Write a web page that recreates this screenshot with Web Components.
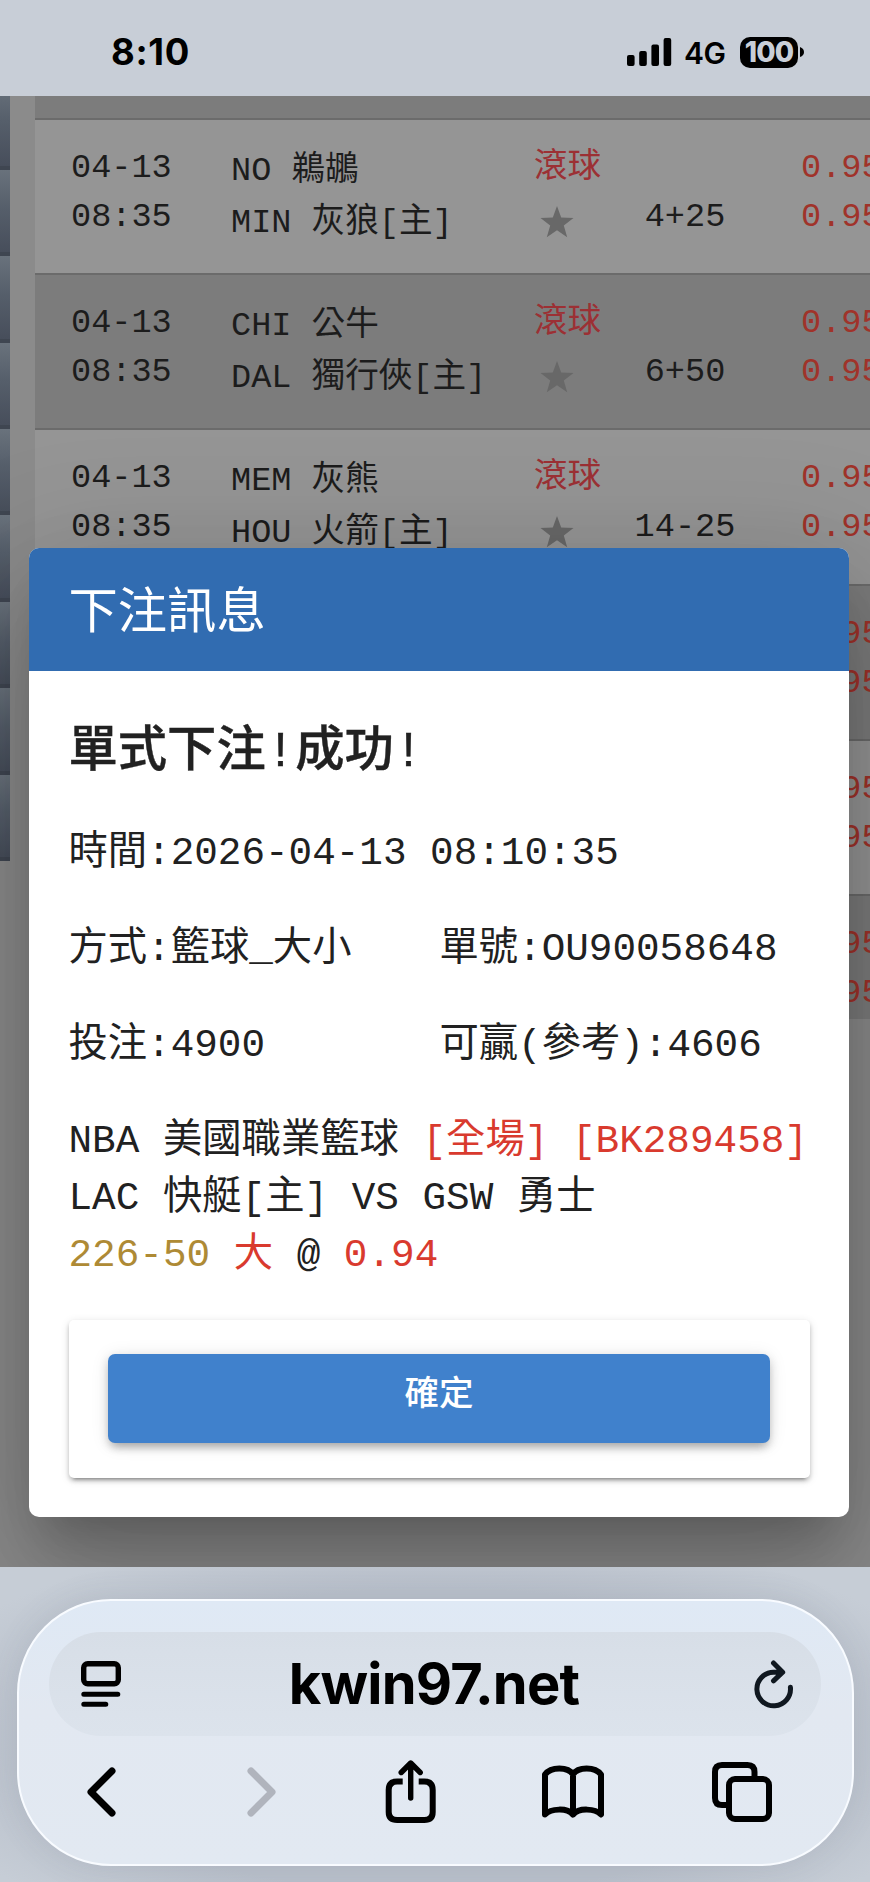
<!DOCTYPE html>
<html lang="zh-Hant">
<head>
<meta charset="utf-8">
<title>下注訊息</title>
<style>
html, body {
  margin: 0;
}
body {
  width: 870px;
  height: 1882px;
  overflow: hidden;
  background: #c8ced7;
  font-family: "Liberation Mono", "Noto Sans CJK TC", monospace;
}
</style>
</head>
<body>
<phone-screen>
  <status-bar slot="status" time="8:10" network="4G" battery="100"></status-bar>
  <side-menu slot="page" count="9"></side-menu>
  <match-table slot="page"></match-table>
  <bet-dialog slot="dialog" heading="下注訊息">
    <span slot="result">單式下注!成功!</span>
    <bet-field label="時間" class="wide">2026-04-13 08:10:35</bet-field>
    <bet-field label="方式">籃球_大小</bet-field>
    <bet-field label="單號">OU90058648</bet-field>
    <bet-field label="投注">4900</bet-field>
    <bet-field label="可贏(參考)">4606</bet-field>
    <bet-summary slot="summary"></bet-summary>
    <span slot="action">確定</span>
  </bet-dialog>
  <browser-bar slot="browser">kwin97.net</browser-bar>
</phone-screen>

<script>
class BaseElement extends HTMLElement {
  constructor() {
    super();
    this.attachShadow({ mode: 'open' });
  }

  connectedCallback() {
    this.shadowRoot.innerHTML = this.render();
  }
}

class PhoneScreen extends BaseElement {
  render() {
    return `
<style>
:host {
  display: flex;
  flex-direction: column;
  width: 870px;
  height: 1882px;
}
.page {
  position: relative;
  display: flex;
  align-items: flex-start;
  height: 1471px;
  overflow: hidden;
  background: #8b8b8b;
}
/* the dialog lies over the page */
.layer {
  position: absolute;
  left: 29px;
  top: 452px;
}
</style>
<slot name="status"></slot>
<div class="page">
  <slot name="page"></slot>
  <div class="layer"><slot name="dialog"></slot></div>
</div>
<slot name="browser"></slot>`;
  }
}

class StatusBar extends BaseElement {
  render() {
    return `
<style>
:host {
  display: flex;
  align-items: center;
  box-sizing: border-box;
  height: 96px;
  padding: 8px 66px 0 111px;
  background: #c8ced7;
  color: #000;
  font-family: Inter, sans-serif;
}
.time {
  flex: 1;
  font-size: 36.500px;
  font-weight: 700;
  line-height: 44px;
  letter-spacing: 0.7px;
}
.network {
  margin: 2px 14px 0 12px;
  width: 42px;
  font-size: 30px;
  font-weight: 600;
  line-height: 36px;
  letter-spacing: -0.4px;
  white-space: nowrap;
}
.battery {
  width: 58px;
  height: 31px;
  border-radius: 10px;
  background: #000;
  color: #c8ced7;
  font-size: 28px;
  font-weight: 800;
  line-height: 31px;
  letter-spacing: -0.8px;
  text-align: center;
}
.nub {
  margin-left: 2px;
}
</style>
<div class="time">${this.getAttribute('time')}</div>
<svg width="45" height="28" viewBox="0 0 45 28">
  <rect x="0" y="17" width="7.6" height="11" rx="2"/>
  <rect x="12.2" y="13" width="7.6" height="15" rx="2"/>
  <rect x="24.4" y="6.5" width="7.6" height="21.5" rx="2"/>
  <rect x="36.6" y="0" width="7.6" height="28" rx="2"/>
</svg>
<div class="network">${this.getAttribute('network')}</div>
<div class="battery">${this.getAttribute('battery')}</div>
<svg class="nub" width="4" height="10" viewBox="0 0 4 10"><path d="M0 0q4 1.500 4 5t-4 5z"/></svg>`;
  }
}

class SideMenu extends BaseElement {
  render() {
    const count = Number(this.getAttribute('count'));
    return `
<style>
:host {
  display: flex;
  flex-direction: column;
  flex: none;
  width: 10px;
  height: 765px;
  margin-right: 25px;
  justify-content: flex-end;
  overflow: hidden;
}
div {
  flex: none;
  box-sizing: border-box;
  height: 86.4px;
  border-bottom: 4px solid #3f4651;
  background: linear-gradient(#69727c, #565f6b 45%, #474e5b);
}
</style>
${'<div></div>'.repeat(count)}`;
  }
}

const matches = [
  { away: 'NO 鵜鶘', home: 'MIN 灰狼[主]', line: '4+25' },
  { away: 'CHI 公牛', home: 'DAL 獨行俠[主]', line: '6+50' },
  { away: 'MEM 灰熊', home: 'HOU 火箭[主]', line: '14-25' },
  {},
  {},
  {}
];

class MatchTable extends BaseElement {
  render() {
    return `
<style>
:host {
  display: block;
  flex: none;
  width: 835px;
  height: 923px;
  overflow: hidden;
}
.head {
  height: 22px;
  background: #7c7c7c;
}
</style>
<div class="head"></div>
${matches.map(() => '<match-row></match-row>').join('')}`;
  }

  connectedCallback() {
    super.connectedCallback();
    this.shadowRoot.querySelectorAll('match-row').forEach((row, i) => {
      row.match = matches[i];
      row.classList.toggle('even', i % 2 === 1);
    });
  }
}

class MatchRow extends BaseElement {
  set match(match) {
    this.data = match;
    this.shadowRoot.innerHTML = this.render();
  }

  render() {
    const match = this.data || {};
    return `
<style>
:host {
  display: grid;
  grid-template-columns: 160px 303px 98px 106px 63px 120px;
  box-sizing: border-box;
  height: 155.200px;
  padding: 24px 0 0 36px;
  border-top: 2px solid #6b6b6b;
  background: #959595;
  color: #1c1c1c;
  font-size: 33.600px;
  line-height: 49px;
  white-space: nowrap;
  overflow: hidden;
}
:host(.even) {
  background: #7c7c7c;
}
.teams {
  padding-top: 2px;
  line-height: 51.600px;
}
.live {
  color: #9c3034;
}
.live svg {
  display: block;
  margin: 13px 0 0 6px;
}
.line {
  padding-top: 49px;
  text-align: center;
}
.odds {
  grid-column: 6;
  color: #a0332a;
}
</style>
${match.home ? `
<div>04-13<br>08:35</div>
<div class="teams">${match.away}<br>${match.home}</div>
<div class="live">滾球
  <svg width="34" height="32" viewBox="0 0 34 32">
    <path fill="#686868" d="M17 0l4.200 11.500 12.300.4-9.700 7.600 3.400 11.700L17 24.300 6.800 31.200l3.400-11.700L.5 11.900l12.300-.4z"/>
  </svg>
</div>
<div class="line">${match.line}</div>` : ''}
<div class="odds">0.95<br>0.95</div>`;
  }
}

class BetDialog extends BaseElement {
  render() {
    return `
<style>
:host {
  display: block;
  width: 820px;
  height: 969px;
  border-radius: 10px;
  overflow: hidden;
  background: #fff;
  color: #212121;
  box-shadow: 0 31px 42px -20px rgba(0, 0, 0, .2),
    0 67px 106px 8px rgba(0, 0, 0, .14),
    0 25px 129px 22px rgba(0, 0, 0, .12);
}
header {
  box-sizing: border-box;
  height: 122.500px;
  padding: 31px 39.500px 0;
  background: #316cb1;
  color: #fff;
  font-size: 49.300px;
  line-height: 72px;
}
section {
  padding: 46px 39.500px 0;
}
h2 {
  margin: 0 0 36px;
  font-size: 49.300px;
  font-weight: 500;
  line-height: 72px;
  -webkit-text-stroke: 0.4px;
}
.fields {
  display: grid;
  grid-template-columns: 371px 370px;
  row-gap: 39px;
  margin-bottom: 39px;
}
::slotted(.wide) {
  grid-column: 1 / 3;
}
.card {
  box-sizing: border-box;
  height: 158px;
  margin-top: 36px;
  padding: 34px 39.500px;
  border-radius: 5px;
  box-shadow: 0 6px 3px -5px rgba(0, 0, 0, .3),
    0 3px 4px rgba(0, 0, 0, .2),
    0 2px 10px rgba(0, 0, 0, .12);
}
button {
  display: block;
  width: 100%;
  height: 89px;
  padding: 0 0 17px;
  border: 0;
  border-radius: 7px;
  background: #4081cc;
  color: #fff;
  font: 500 34.500px/72px "Noto Sans CJK TC", sans-serif;
  box-shadow: 0 8px 10px -5px rgba(0, 0, 0, .2),
    0 4px 10px rgba(0, 0, 0, .16),
    0 2px 18px rgba(0, 0, 0, .1);
}
</style>
<header>${this.getAttribute('heading')}</header>
<section>
  <h2><slot name="result"></slot></h2>
  <div class="fields"><slot></slot></div>
  <slot name="summary"></slot>
  <div class="card"><button><slot name="action"></slot></button></div>
</section>`;
  }
}

class BetField extends BaseElement {
  render() {
    return `
<style>
:host {
  display: block;
  font-size: 39.300px;
  line-height: 57px;
  white-space: nowrap;
}
</style>
${this.getAttribute('label')}:<slot></slot>`;
  }
}

class BetSummary extends BaseElement {
  render() {
    return `
<style>
:host {
  display: block;
  font-size: 39.350px;
  line-height: 57px;
  white-space: nowrap;
}
.red {
  color: #d93a2e;
}
.gold {
  color: #ae8a35;
}
</style>
<div>NBA 美國職業籃球 <span class="red">[全場] [BK289458]</span></div>
<div>LAC 快艇[主] VS GSW 勇士</div>
<div><span class="gold">226-50</span> <span class="red">大</span> @ <span class="red">0.94</span></div>`;
  }
}

class BrowserBar extends BaseElement {
  render() {
    return `
<style>
:host {
  display: block;
  box-sizing: border-box;
  height: 315px;
  padding: 32px 16px 0 17px;
  background: radial-gradient(ellipse 480px 190px at 50% 55%, #b8bfca 80%, #c6cdd6 115%);
}
.panel {
  box-sizing: border-box;
  height: 267px;
  padding: 31px 31px 0 30px;
  border: 2px solid #f8fbff;
  border-radius: 94px;
  background: linear-gradient(#dfe9f5, #e2e8f1 42%, #e2e9f2);
  box-shadow: 0 0 32px rgba(90, 100, 115, .12);
}
.address {
  display: flex;
  align-items: center;
  justify-content: space-between;
  box-sizing: border-box;
  height: 104px;
  padding: 0 27px 0 32px;
  border-radius: 52px;
  background: linear-gradient(#d7dee7, #dce3ec);
}
.url {
  margin-right: 7px;
  font: 700 56px/68px Inter, sans-serif;
  letter-spacing: -0.8px;
  color: #000;
}
.tools {
  display: flex;
  align-items: center;
  justify-content: space-between;
  height: 64px;
  padding: 24px 49px 0 38px;
}
svg {
  fill: none;
  stroke: #000;
  stroke-width: 6;
  stroke-linecap: round;
  stroke-linejoin: round;
  overflow: visible;
}
</style>
<div class="panel">
  <div class="address">
    <svg width="40" height="46" viewBox="0 0 40 46">
      <rect x="2.700" y="2.700" width="34.600" height="20" rx="4" style="stroke-width:5.400"/>
      <path d="M2.800 33.300h34M2.800 43.300h22" style="stroke-width:5"/>
    </svg>
    <span class="url"><slot></slot></span>
    <svg width="40" height="48" viewBox="0 0 40 48" style="stroke:#101820;stroke-width:5">
      <path d="M36.400 27.300A16.800 16.800 0 1 1 19.500 12.200H28M19.500 3l9.200 9.200-9.200 8.600"/>
    </svg>
  </div>
  <div class="tools">
    <svg width="52" height="50" viewBox="0 0 52 50"><path d="M25 4L4 25l21 21" style="stroke-width:7"/></svg>
    <svg width="29" height="50" viewBox="0 0 29 50" style="stroke:#b0b4bd"><path d="M4 4l21 21-21 21" style="stroke-width:7"/></svg>
    <svg width="50" height="64" viewBox="-1.700 0 50 64" style="stroke-linecap:butt">
      <path d="M17 21.600h-5.500q-8.500 0-8.500 8.500v22q0 8 8.500 8h27q8.500 0 8.500-8v-22q0-8.500-8.500-8.500H33"/>
      <path d="M25 38V3.500M15.500 12.500L25 3l9.500 9.500" style="stroke-width:5.400;stroke-linecap:round"/>
    </svg>
    <svg width="62" height="54" viewBox="0 0 62 54">
      <path d="M31 9.500v40M31 9.500C26 1.500 9 1.500 3 9.500v40C9 43.500 25 42.500 31 49.500 37 42.500 53 43.500 59 49.500v-40C53 1.500 36 1.500 31 9.500z"/>
    </svg>
    <svg width="60" height="60" viewBox="0 0 60 60">
      <path d="M42.500 14V10q0-7-7-7H10q-7 0-7 7v26q0 7 7 7h4" style="stroke-linecap:butt"/>
      <rect x="17" y="17" width="40" height="40" rx="6"/>
    </svg>
  </div>
</div>`;
  }
}

customElements.define('match-row', MatchRow);
customElements.define('match-table', MatchTable);
customElements.define('side-menu', SideMenu);
customElements.define('status-bar', StatusBar);
customElements.define('bet-field', BetField);
customElements.define('bet-summary', BetSummary);
customElements.define('bet-dialog', BetDialog);
customElements.define('browser-bar', BrowserBar);
customElements.define('phone-screen', PhoneScreen);
</script>
</body>
</html>
